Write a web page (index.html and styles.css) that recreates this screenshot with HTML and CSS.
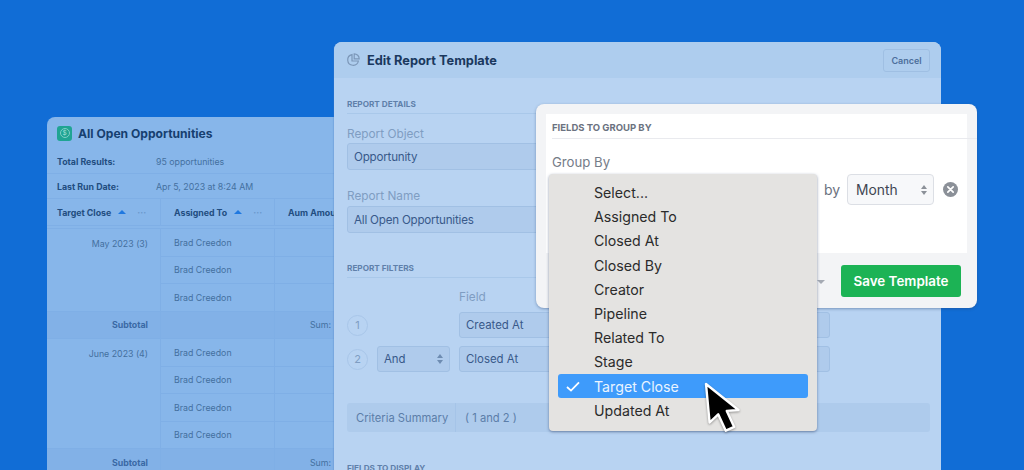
FILE: index.html
```html
<!DOCTYPE html>
<html lang="en">
<head>
<meta charset="utf-8">
<title>Edit Report Template</title>
<link rel="stylesheet" href="styles.css">
</head>
<body>
<main class="stage">

  <section class="report">
    <header class="report-title">
      <span class="report-icon"><span class="report-dollar">$</span></span>
      <h2>All Open Opportunities</h2>
    </header>
    <div class="meta"><b>Total Results:</b><span>95 opportunities</span></div>
    <div class="meta"><b>Last Run Date:</b><span>Apr 5, 2023 at 8:24 AM</span></div>
    <div class="table">
      <div class="th"><span>Target Close</span><i class="sort"></i><i class="dots">···</i></div>
      <div class="th"><span>Assigned To</span><i class="sort"></i><i class="dots">···</i></div>
      <div class="th"><span>Aum Amount</span></div>
      <div class="spacer"></div>

      <div class="td month span3">May 2023 (3)</div>
      <div class="td">Brad Creedon</div><div class="td"></div>
      <div class="td">Brad Creedon</div><div class="td"></div>
      <div class="td">Brad Creedon</div><div class="td"></div>
      <div class="td sub right"><b>Subtotal</b></div><div class="td sub"></div><div class="td sub sum">Sum:</div>

      <div class="td month span4">June 2023 (4)</div>
      <div class="td">Brad Creedon</div><div class="td"></div>
      <div class="td">Brad Creedon</div><div class="td"></div>
      <div class="td">Brad Creedon</div><div class="td"></div>
      <div class="td">Brad Creedon</div><div class="td"></div>
      <div class="td sub right"><b>Subtotal</b></div><div class="td sub"></div><div class="td sub sum">Sum:</div>
    </div>
  </section>

  <section class="modal">
    <header class="modal-head">
      <svg class="pie" viewBox="0 0 14 14" width="14" height="14" aria-hidden="true">
        <path d="M6 1.6a5.4 5.4 0 1 0 6.4 6.4H6z" fill="none" stroke="#7c97b8" stroke-width="1.2"/>
        <path d="M8.2.8a5 5 0 0 1 5 5H8.2z" fill="none" stroke="#7c97b8" stroke-width="1.2"/>
      </svg>
      <h1>Edit Report Template</h1>
      <button class="cancel" type="button">Cancel</button>
    </header>
    <div class="modal-body">
      <h3 class="section">REPORT DETAILS</h3>
      <div class="label first">Report Object</div>
      <div class="input">Opportunity</div>
      <div class="label">Report Name</div>
      <div class="input">All Open Opportunities</div>

      <h3 class="section filters">REPORT FILTERS</h3>
      <div class="filter-grid">
        <div class="label field-label">Field</div>
        <span class="num">1</span><span></span><div class="input small">Created At</div>
        <span class="num">2</span><div class="input small stepper">And</div><div class="input small">Closed At</div>
      </div>
      <div class="criteria"><span class="criteria-name">Criteria Summary</span><span class="criteria-value">( 1 and 2 )</span></div>
      <h3 class="section display">FIELDS TO DISPLAY</h3>
    </div>
  </section>

  <section class="pop">
    <div class="pop-inner">
      <h3 class="pop-title">FIELDS TO GROUP BY</h3>
      <div class="pop-label">Group By</div>
      <div class="group-row">
        <div class="group-select"></div>
        <span class="by">by</span>
        <div class="month-select stepper">Month</div>
        <svg class="remove" viewBox="0 0 14 14" width="15" height="15" aria-hidden="true">
          <circle cx="7" cy="7" r="7" fill="#8b9098"/>
          <path d="M4.5 4.5l5 5M9.5 4.5l-5 5" stroke="#fff" stroke-width="1.6" stroke-linecap="round"/>
        </svg>
      </div>
    </div>
    <footer class="pop-foot">
      <i class="foot-caret"></i>
      <button class="save" type="button">Save Template</button>
    </footer>
  </section>

  <ul class="menu">
    <li>Select...</li>
    <li>Assigned To</li>
    <li>Closed At</li>
    <li>Closed By</li>
    <li>Creator</li>
    <li>Pipeline</li>
    <li>Related To</li>
    <li>Stage</li>
    <li class="active">
      <svg class="check" viewBox="0 0 14 11" width="14" height="11" aria-hidden="true"><path d="M1 6l4 3.6L13 1.4" fill="none" stroke="#fff" stroke-width="1.8"/></svg>
      Target Close
    </li>
    <li>Updated At</li>
  </ul>

  <svg class="cursor" viewBox="0 0 40 56" width="40" height="56" aria-hidden="true">
    <path d="M5 3l3.6 38.5 8.6-8.2 7.6 16.4 8.4-3.8-7.4-16 11.7-.9z" fill="#000" stroke="#fff" stroke-width="2.4" stroke-linejoin="round"/>
  </svg>

</main>
</body>
</html>
```
FILE: styles.css
```css
* { box-sizing: border-box; }
html, body { margin: 0; padding: 0; }
body { font-family: Inter, "Liberation Sans", sans-serif; background: #116dd6; }
h1, h2, h3, ul { margin: 0; padding: 0; }
i { font-style: normal; }

.stage { position: relative; width: 1024px; height: 470px; overflow: hidden; background: #116dd6; }

/* back report window */
.report { position: absolute; left: 47px; top: 117px; width: 300px; height: 370px; background: #87b6ea; border-radius: 8px 8px 0 0; color: #44709f; font-size: 8.8px; overflow: hidden; }
.report-title { display: flex; align-items: center; gap: 6px; height: 32px; padding: 0 10px; }
.report-title h2 { font-size: 12.1px; font-weight: 700; color: #163f70; }
.report-icon { width: 15px; height: 15px; border-radius: 3px; background: #1fa493; display: flex; align-items: center; justify-content: center; }
.report-dollar { width: 10px; height: 10px; border: 1px solid #7fcfc6; border-radius: 50%; color: #a8e0d9; font-size: 6.5px; line-height: 8px; text-align: center; }
.meta { display: flex; align-items: center; height: 25px; padding: 0 10px; border-bottom: 1px solid #7fafe6; }
.meta b { width: 99px; color: #224d80; font-weight: 700; }

.table { display: grid; grid-template-columns: 114px 114px 1fr; grid-auto-rows: 27.5px; grid-template-rows: 27px 3px; }
.th { display: flex; align-items: center; padding-left: 13px; font-weight: 700; color: #224d80; border-right: 1px solid #7fafe6; border-bottom: 1px solid #7fafe6; white-space: nowrap; position: relative; }
.th:first-child { padding-left: 10px; }
.sort { width: 0; height: 0; margin-left: 7px; border-left: 4px solid transparent; border-right: 4px solid transparent; border-bottom: 4px solid #1f78e0; }
.dots { margin-left: 11px; color: #6b98cc; font-size: 9px; letter-spacing: 0; }
.spacer { grid-column: 1 / -1; border-bottom: 1px solid #7fafe6; }
.td { display: flex; align-items: center; padding-left: 13px; border-right: 1px solid #7fafe6; border-bottom: 1px solid #7fafe6; white-space: nowrap; }
.month { grid-column: 1; justify-content: flex-end; align-items: flex-start; padding: 9px 12px 0 0; }
.span3 { grid-row: span 3; }
.span4 { grid-row: span 4; }
.sub { background: #82b1e7; }
.right { justify-content: flex-end; padding: 0 12px 0 0; }
.right b { color: #3a69a5; font-weight: 700; }
.sum { justify-content: flex-end; padding: 0 15px 0 0; }

/* edit template window */
.modal { position: absolute; left: 334px; top: 42px; width: 607px; height: 440px; background: #b8d3f2; border-radius: 8px 8px 0 0; box-shadow: -1px 0 1px rgba(70, 120, 190, .25); overflow: hidden; }
.modal-head { display: flex; align-items: center; height: 36px; padding: 0 11px 0 12px; background: #aecdee; }
.pie { margin-right: 7px; }
.modal-head h1 { font-size: 12.8px; font-weight: 700; color: #1a385e; flex: 1; }
.cancel { width: 47px; height: 23px; padding: 0; border: 1px solid #9fbfe3; border-radius: 3px; background: #aecdee; font: 600 9px Inter, sans-serif; color: #4d6f9c; }
.modal-body { padding: 21px 11px 0 13px; }
.section { font-size: 8.2px; line-height: 10px; font-weight: 700; color: #5f80aa; padding-bottom: 4px; border-bottom: 1px solid #a9c8ea; }
.section.filters { margin-top: 30px; }
.section.display { margin-top: 31px; border-bottom: 0; }
.label { margin-top: 18px; font-size: 11.8px; line-height: 16px; padding-bottom: 2px; color: #7f9dc2; }
.label.first { margin-top: 11px; line-height: 18px; padding-bottom: 0; }
.input { margin-top: 0; height: 27px; width: 583px; padding-left: 6px; display: flex; align-items: center; background: #afcbec; border: 1px solid #a1c0e4; border-radius: 3px; font-size: 11.6px; letter-spacing: -.2px; color: #38598a; }
.filter-grid { display: grid; grid-template-columns: 30px 82px 371px; grid-template-rows: 15px 26px 26px; row-gap: 8px; margin-top: 11px; }
.field-label { grid-column: 3; margin-top: 0; }
.input.small { margin: 0; width: auto; height: 26px; letter-spacing: 0; font-size: 11.4px; }
.filter-grid .input.small.stepper { width: 73px; position: relative; }
.num { width: 21px; height: 21px; align-self: center; border: 1px solid #a8c6e9; border-radius: 50%; display: flex; align-items: center; justify-content: center; font-size: 11px; color: #7f9dc2; }
.stepper { position: relative; }
.stepper::before, .stepper::after { content: ""; position: absolute; right: 6px; width: 0; height: 0; border-left: 3px solid transparent; border-right: 3px solid transparent; }
.stepper::before { top: calc(50% - 5px); border-bottom: 4px solid #6e8cb2; }
.stepper::after { top: calc(50% + 1px); border-top: 4px solid #6e8cb2; }
.criteria { display: flex; align-items: center; height: 29px; margin-top: 31px; background: #aecbec; border-radius: 3px; font-size: 11.2px; color: #5c7ea9; }
.criteria-name { width: 109px; height: 100%; padding-left: 9px; display: flex; align-items: center; border-right: 1px solid #a5c4e8; }
.criteria-value { padding-left: 9px; }

/* group-by popover */
.pop { position: absolute; left: 536px; top: 104px; width: 441px; height: 204px; padding: 10px 10px 0; background: #f3f4f6; border-radius: 8px; box-shadow: 0 1px 3px rgba(40, 70, 120, .45); display: flex; flex-direction: column; }
.pop-inner { height: 139px; background: #fff; padding: 0 0 0 6px; }
.pop-title { height: 25px; line-height: 28px; font-size: 9.5px; font-weight: 700; color: #6b7280; border-bottom: 1px solid #e9eaee; margin-right: -10px; }
.pop-label { margin-top: 14px; font-size: 13.2px; line-height: 18px; color: #757c88; }
.group-row { display: flex; align-items: center; margin-top: 3px; height: 31px; }
.group-select { width: 260px; height: 31px; }
.by { margin-left: 12px; width: 23px; font-size: 14px; color: #6b7280; }
.month-select { width: 87px; height: 31px; padding-left: 8px; display: flex; align-items: center; background: #f7f8fa; border: 1px solid #dcdfe5; border-radius: 4px; font-size: 13.8px; color: #3f4652; }
.month-select::before { border-bottom-color: #8b9098; }
.month-select::after { border-top-color: #8b9098; }
.remove { margin-left: 9px; }
.pop-foot { flex: 1; margin: 0 -10px; padding: 12px 16px 0 0; display: flex; justify-content: flex-end; align-items: flex-start; gap: 16px; }
.foot-caret { width: 0; height: 0; margin-top: 15px; border-left: 4px solid transparent; border-right: 4px solid transparent; border-top: 4px solid #a5aab3; }
.save { width: 120px; height: 32px; padding: 0; border: 0; border-radius: 3px; background: #1cb355; color: #fff; font: 600 13.4px Inter, sans-serif; }

/* native dropdown */
.menu { position: absolute; left: 549px; top: 174px; width: 268px; height: 257px; padding: 6px 9px 9px; list-style: none; background: #e4e3e1; border-radius: 4px; box-shadow: 0 1px 3px rgba(40, 60, 100, .55); }
.menu li { position: relative; height: 24.2px; padding-left: 36px; font-size: 14.2px; line-height: 25px; color: #2b2b2b; }
.menu li.active { background: #3e9bfb; border-radius: 3px; color: #eaf4ff; }
.check { position: absolute; left: 8px; top: 7px; }

.cursor { position: absolute; left: 701px; top: 381px; filter: drop-shadow(0 1px 1px rgba(0, 0, 0, .35)); }
```
